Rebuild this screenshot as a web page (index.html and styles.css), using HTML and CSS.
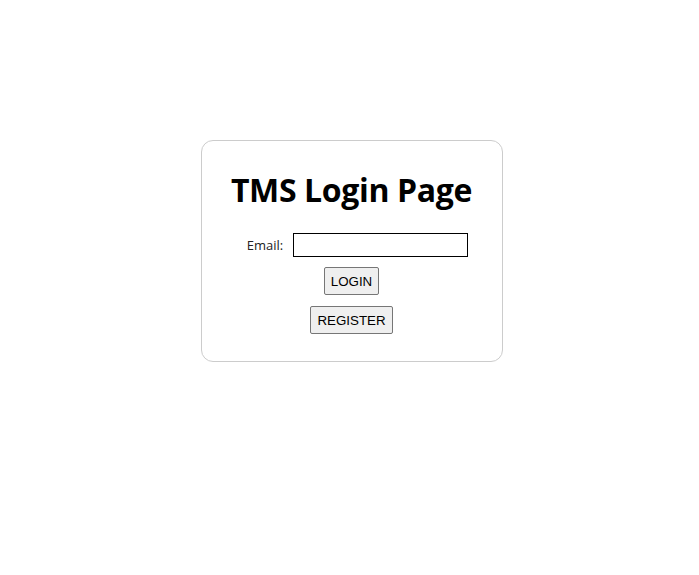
FILE: index.html
```html
<!DOCTYPE html>
<html lang="en">
<head>
<meta charset="utf-8">
<title>TMS Login Page</title>
<link rel="stylesheet" href="styles.css">
</head>
<body>
<div class="page">
  <div class="card">
    <h1 class="title">TMS Login Page</h1>
    <form class="form">
      <div class="field">
        <label class="label" for="email">Email:</label>
        <input class="input" id="email" type="email">
      </div>
      <div class="actions">
        <button type="button" class="btn">LOGIN</button>
      </div>
      <div class="actions actions-last">
        <button type="button" class="btn">REGISTER</button>
      </div>
    </form>
  </div>
</div>
</body>
</html>
```
FILE: styles.css
```css
html, body {
  margin: 0;
  padding: 0;
  background: #ffffff;
}
body {
  font-family: "Open Sans", "Noto Sans", "Liberation Sans", sans-serif;
  color: #000;
}
.page {
  display: flex;
  justify-content: center;
  padding-top: 140px;
  padding-left: 4px;
}
.card {
  box-sizing: border-box;
  width: 302px;
  height: 222px;
  padding-top: 28px;
  border: 1px solid #cccccc;
  border-radius: 12px;
  display: flex;
  flex-direction: column;
  align-items: center;
}
.title {
  margin: 0 0 22px;
  font-size: 32px;
  font-weight: 700;
  line-height: 42px;
  letter-spacing: -0.35px;
  white-space: nowrap;
}
.form {
  display: flex;
  flex-direction: column;
  align-items: center;
  gap: 10px;
}
.field {
  display: flex;
  align-items: center;
  gap: 10px;
  padding-left: 12px;
}
.label {
  font-size: 13px;
  color: #222;
}
.input {
  box-sizing: border-box;
  width: 175px;
  height: 24px;
  border: 1px solid #000;
  border-radius: 0;
  padding: 1px 3px;
  margin: 0;
}
.actions {
  display: flex;
  justify-content: center;
}
.actions-last {
  margin-top: 1px;
}
.btn {
  font-family: "Liberation Sans", Arial, sans-serif;
  font-size: 13.333px;
  height: 28px;
  padding: 1px 6px;
  margin: 0;
  background: #efefef;
  color: #000;
  border: 1px solid #767676;
  border-radius: 2px;
}
```
